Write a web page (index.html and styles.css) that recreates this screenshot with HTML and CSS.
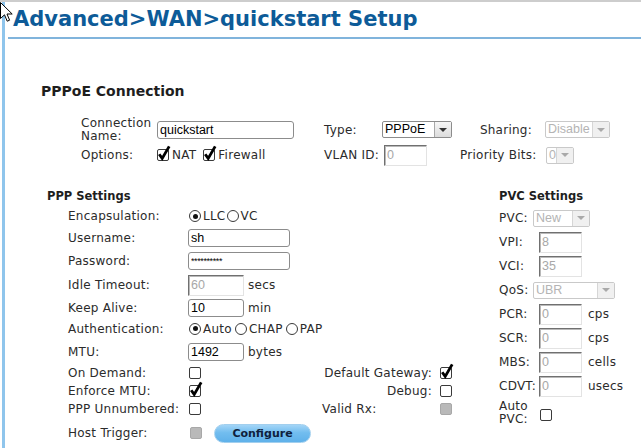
FILE: index.html
```html
<!DOCTYPE html>
<html>
<head>
<meta charset="utf-8">
<title>Advanced WAN quickstart Setup</title>
<link rel="stylesheet" href="styles.css">
</head>
<body>
<svg class="cursor" width="13" height="21" viewBox="0 0 13 21"><path d="M0.5 0.5 V16.5 L4.5 12.8 L7.2 19.2 L9.6 18.2 L7 12 H12.2 Z" fill="#fff" stroke="#000" stroke-width="1"/></svg>
<div class="page">
  <header class="title-bar"><h1 class="title">Advanced&gt;WAN&gt;quickstart Setup</h1></header>

  <section class="pppoe">
    <h2 class="sec-title">PPPoE Connection</h2>
    <div class="conn-grid">
      <div class="lbl two-line">Connection<br>Name:</div>
      <div class="ctl"><input class="txt w-name" type="text" value="quickstart"></div>
      <div class="lbl">Type:</div>
      <div class="ctl"><span class="sel w-type"><span class="sel-val">PPPoE</span><span class="sel-btn"><i class="tri"></i></span></span></div>
      <div class="lbl right">Sharing:</div>
      <div class="ctl"><span class="sel dis w-share"><span class="sel-val">Disable</span><span class="sel-btn"><i class="tri"></i></span></span></div>

      <div class="lbl">Options:</div>
      <div class="ctl opts">
        <span class="cb on"><svg width="14" height="17" viewBox="0 0 14 17"><path d="M2.2 10.2 L5.2 14.4 L12.2 2.4" fill="none" stroke="#000" stroke-width="2.8"/></svg></span><span class="opt-t">NAT</span>
        <span class="cb on"><svg width="14" height="17" viewBox="0 0 14 17"><path d="M2.2 10.2 L5.2 14.4 L12.2 2.4" fill="none" stroke="#000" stroke-width="2.8"/></svg></span><span class="opt-t">Firewall</span>
      </div>
      <div class="lbl">VLAN ID:</div>
      <div class="ctl"><input class="txt dis w-vlan" type="text" value="0"></div>
      <div class="lbl right">Priority Bits:</div>
      <div class="ctl"><span class="sel dis w-prio"><span class="sel-val">0</span><span class="sel-btn"><i class="tri"></i></span></span></div>
    </div>
  </section>

  <div class="cols">
    <section class="ppp">
      <h3 class="sub-title">PPP Settings</h3>
      <div class="rows">
        <div class="row h20">
          <div class="lbl">Encapsulation:</div>
          <div class="ctl span3"><span class="rd on"></span><span class="rt">LLC</span><span class="rd"></span><span class="rt">VC</span></div>
        </div>
        <div class="row h23">
          <div class="lbl">Username:</div>
          <div class="ctl span3"><input class="txt w-user" type="text" value="sh"></div>
        </div>
        <div class="row h24">
          <div class="lbl">Password:</div>
          <div class="ctl span3"><input class="txt w-user pw" type="text" value="**********"></div>
        </div>
        <div class="row h24">
          <div class="lbl">Idle Timeout:</div>
          <div class="ctl span3"><input class="txt dis w-short" type="text" value="60"><span class="unit">secs</span></div>
        </div>
        <div class="row h22">
          <div class="lbl">Keep Alive:</div>
          <div class="ctl span3"><input class="txt w-short" type="text" value="10"><span class="unit">min</span></div>
        </div>
        <div class="row h19">
          <div class="lbl">Authentication:</div>
          <div class="ctl span3"><span class="rd on"></span><span class="rt gap">Auto</span><span class="rd"></span><span class="rt gap">CHAP</span><span class="rd"></span><span class="rt">PAP</span></div>
        </div>
        <div class="row h28">
          <div class="lbl">MTU:</div>
          <div class="ctl span3"><input class="txt w-short" type="text" value="1492"><span class="unit">bytes</span></div>
        </div>
        <div class="row h14">
          <div class="lbl">On Demand:</div>
          <div class="ctl"><span class="cb"></span></div>
          <div class="lbl right-end">Default Gateway:</div>
          <div class="ctl rcb"><span class="cb on"><svg width="14" height="17" viewBox="0 0 14 17"><path d="M2.2 10.2 L5.2 14.4 L12.2 2.4" fill="none" stroke="#000" stroke-width="2.8"/></svg></span></div>
        </div>
        <div class="row h22">
          <div class="lbl">Enforce MTU:</div>
          <div class="ctl"><span class="cb on"><svg width="14" height="17" viewBox="0 0 14 17"><path d="M2.2 10.2 L5.2 14.4 L12.2 2.4" fill="none" stroke="#000" stroke-width="2.8"/></svg></span></div>
          <div class="lbl right-end">Debug:</div>
          <div class="ctl rcb"><span class="cb"></span></div>
        </div>
        <div class="row h14">
          <div class="lbl">PPP Unnumbered:</div>
          <div class="ctl"><span class="cb"></span></div>
          <div class="lbl">Valid Rx:</div>
          <div class="ctl rcb"><span class="cb dis"></span></div>
        </div>
        <div class="row h34">
          <div class="lbl">Host Trigger:</div>
          <div class="ctl span3"><span class="cb dis host"></span><span class="btn">Configure</span></div>
        </div>
      </div>
    </section>

    <section class="pvc">
      <h3 class="sub-title">PVC Settings</h3>
      <div class="pvc-grid">
        <div class="lbl">PVC:</div>
        <div class="ctl"><span class="sel dis w-pvc pull"><span class="sel-val">New</span><span class="sel-btn"><i class="tri"></i></span></span></div>
        <div class="lbl">VPI:</div>
        <div class="ctl"><input class="txt dis w-num" type="text" value="8"></div>
        <div class="lbl">VCI:</div>
        <div class="ctl"><input class="txt dis w-num" type="text" value="35"></div>
        <div class="lbl">QoS:</div>
        <div class="ctl"><span class="sel dis w-qos pull"><span class="sel-val">UBR</span><span class="sel-btn"><i class="tri"></i></span></span></div>
        <div class="lbl">PCR:</div>
        <div class="ctl"><input class="txt dis w-num" type="text" value="0"><span class="unit u2">cps</span></div>
        <div class="lbl">SCR:</div>
        <div class="ctl"><input class="txt dis w-num" type="text" value="0"><span class="unit u2">cps</span></div>
        <div class="lbl">MBS:</div>
        <div class="ctl"><input class="txt dis w-num" type="text" value="0"><span class="unit u2">cells</span></div>
        <div class="lbl">CDVT:</div>
        <div class="ctl"><input class="txt dis w-num" type="text" value="0"><span class="unit u2">usecs</span></div>
        <div class="lbl auto-lbl">Auto<br>PVC:</div>
        <div class="ctl"><span class="cb auto-cb"></span></div>
      </div>
    </section>
  </div>
</div>
</body>
</html>
```

FILE: styles.css
```css
* { box-sizing: border-box; }
html, body { margin: 0; padding: 0; background: #fff; }
body {
  width: 641px;
  height: 448px;
  overflow: hidden;
  position: relative;
  border-top: 2px solid #cdcdcd;
  font-family: "DejaVu Sans", Verdana, sans-serif;
  font-size: 12px;
  color: #2b2b2b;
}
.cursor { position: absolute; left: 0; top: 0; z-index: 5; }

.page {
  margin-left: 2px;
  border-left: 3px solid #8fc5ec;
  height: 446px;
}
.title-bar {
  margin-left: 3px;
  padding: 4px 0 5px 5px;
  border-bottom: 2px solid #80b4dc;
}
.title {
  margin: 0;
  font-size: 21px;
  line-height: 26px;
  font-weight: bold;
  color: #0d5b98;
  white-space: nowrap;
}

.pppoe { margin-top: 44px; padding-left: 36px; }
.sec-title {
  margin: 0;
  font-size: 14px;
  line-height: 17px;
  font-weight: bold;
  color: #1e1e1e;
}
.conn-grid {
  display: grid;
  grid-template-columns: 76px 167px 59px 77px 79px auto;
  grid-template-rows: 27px 24px;
  align-items: center;
  margin: 16px 0 0 40px;
}

.lbl { letter-spacing: .25px; white-space: nowrap; line-height: 14px; }
.two-line { line-height: 13px; }
.right { text-align: right; padding-right: 7px; }
.right-end { text-align: right; }

.ctl { display: flex; align-items: center; white-space: nowrap; }
.span3 { grid-column: 2 / 5; }

.opts .cb { margin-left: 0; }
.opt-t { margin: 0 7px 0 3px; letter-spacing: .25px; }

.cols { display: flex; margin-top: 22px; }
.ppp { width: 494px; padding-left: 42px; }
.pvc { flex: 1; }
.sub-title {
  margin: 0;
  font-size: 11.5px;
  line-height: 14px;
  font-weight: bold;
  color: #1e1e1e;
}
.rows { margin: 3px 0 0 21px; }
.row {
  display: grid;
  grid-template-columns: 120px 134px 110px auto;
  align-items: center;
}
.h14 { height: 14px; }
.h19 { height: 19px; }
.h20 { height: 20px; }
.h22 { height: 22px; }
.h23 { height: 23px; }
.h24 { height: 24px; }
.h28 { height: 28px; }
.h34 { height: 34px; }
.rcb { padding-left: 7px; }

.pvc-grid {
  display: grid;
  grid-template-columns: 40px auto;
  grid-template-rows: repeat(8, 24px) 30px;
  align-items: center;
  margin-top: 3px;
}
.auto-lbl { line-height: 13px; }
.auto-cb { margin-left: 1px; margin-top: 3px; }

/* text inputs */
.txt {
  height: 18px;
  margin: 0;
  padding: 0 2px;
  border: 1px solid #8c8c8c;
  border-radius: 3px;
  background: #fff;
  font: 12.5px "Liberation Sans", Arial, sans-serif;
  color: #000;
  outline: none;
}
.txt.dis {
  height: 21px;
  border-radius: 0;
  border-top: 1px solid #707070;
  border-left: 1px solid #707070;
  border-right: 1px solid #e3e3e3;
  border-bottom: 1px solid #e3e3e3;
  box-shadow: inset 1px 1px 0 #b9b9b9;
  color: #a8a8a8;
}
.pw { font-size: 9px; letter-spacing: -0.4px; }
.w-name { width: 137px; }
.w-user { width: 102px; }
.w-short { width: 56px; }
.w-vlan { width: 43px; margin-left: 1px; }
.w-num { width: 43px; }
.unit { margin-left: 4px; letter-spacing: .25px; }
.u2 { margin-left: 6px; }

/* selects */
.sel {
  display: inline-flex;
  height: 17px;
  border: 1px solid #8c8c8c;
  border-radius: 2px;
  background: #fff;
  font: 12.5px "Liberation Sans", Arial, sans-serif;
  color: #000;
}
.sel-val { flex: 1; padding-left: 2px; line-height: 15px; overflow: hidden; }
.sel-btn {
  width: 17px;
  border-left: 1px solid #a8a8a8;
  background: linear-gradient(#f6f6f6, #dcdcdc);
  display: flex;
  align-items: center;
  justify-content: center;
}
.tri {
  width: 0;
  height: 0;
  border-left: 4px solid transparent;
  border-right: 4px solid transparent;
  border-top: 4px solid #333;
}
.sel.dis { border-color: #c9c9c9; color: #b4b4b4; }
.sel.dis .sel-btn { border-left-color: #d6d6d6; background: #f0f0f0; }
.sel.dis .tri { border-top-color: #a9a9a9; }
.w-type { width: 70px; margin-left: -1px; }
.w-share { width: 65px; margin-left: 6px; }
.w-prio { width: 28px; margin-left: 7px; }
.w-pvc { width: 57px; }
.w-qos { width: 82px; }
.pull { margin-left: -6px; }

/* checkboxes */
.cb {
  position: relative;
  display: inline-block;
  flex: none;
  width: 12px;
  height: 12px;
  border: 1px solid #3a3a3a;
  border-radius: 2px;
  background: #fff;
}
.cb svg { position: absolute; left: -1px; top: -6px; }
.cb.dis { background: #b9b9b9; border-color: #a8a8a8; }
.row .ctl > .cb { margin-left: 1px; }
.host { margin-left: 2px !important; }

/* radios */
.rd {
  position: relative;
  display: inline-block;
  flex: none;
  width: 12px;
  height: 12px;
  margin-left: 1px;
  border: 1px solid #3a3a3a;
  border-radius: 50%;
  background: #fff;
}
.rd.on::after {
  content: "";
  position: absolute;
  left: 2.5px;
  top: 2.5px;
  width: 5px;
  height: 5px;
  border-radius: 50%;
  background: #111;
}
.rt { margin-left: 2px; letter-spacing: .25px; }
.rt.gap { margin-right: 2px; }

/* button */
.btn {
  display: flex;
  align-items: center;
  justify-content: center;
  margin-left: 12px;
  width: 97px;
  height: 19px;
  border-radius: 10px;
  border: 1px solid #a2cfee;
  background: linear-gradient(#a3d5f7, #72bdef 45%, #5fb1ea);
  font: bold 11px "DejaVu Sans", Verdana, sans-serif;
  color: #0f1f3d;
}
```
